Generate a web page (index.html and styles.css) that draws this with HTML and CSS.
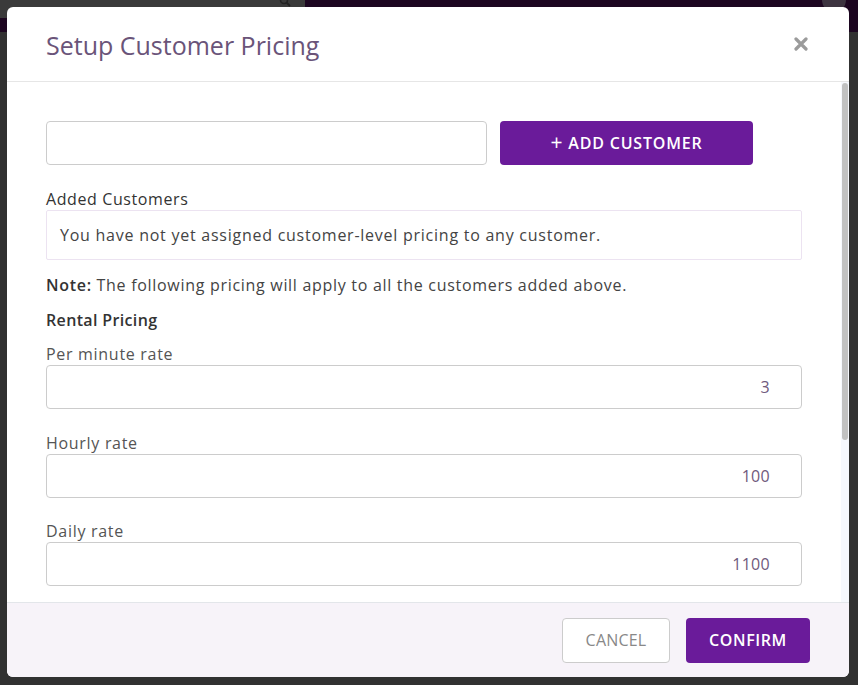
FILE: index.html
```html
<!DOCTYPE html>
<html lang="en">
<head>
    <meta charset="UTF-8">
    <meta name="viewport" content="width=device-width, initial-scale=1.0">
    <title>Setup Customer Pricing</title>
    <link rel="stylesheet" href="styles.css">
</head>
<body>

<div class="page-bar">
    <div class="search-box">
        <svg class="search-icon" width="12" height="12" viewBox="0 0 12 12"><circle cx="5" cy="5" r="3.5" fill="none" stroke="#222" stroke-width="1.6"/><path d="M7.5 7.5 L11 11" stroke="#222" stroke-width="1.8"/></svg>
    </div>
    <div class="avatar"></div>
</div>

<div class="modal">
    <div class="modal-header">
        <h2>Setup Customer Pricing</h2>
        <button type="button" class="close-btn">
            <svg width="14" height="14" viewBox="0 0 14 14"><path d="M2 2 L12 12 M12 2 L2 12" stroke="#9b9b9b" stroke-width="3.2" stroke-linecap="round"/></svg>
        </button>
    </div>

    <div class="modal-body">
        <div class="customer-row">
            <input type="text" class="text-input">
            <button type="button" class="btn-primary add-btn"><span class="plus">+</span> ADD CUSTOMER</button>
        </div>

        <div class="section-label">Added Customers</div>
        <div class="customer-list">You have not yet assigned customer-level pricing to any customer.</div>

        <p class="note"><b>Note:</b> The following pricing will apply to all the customers added above.</p>

        <div class="section-title">Rental Pricing</div>

        <div class="form-group">
            <label>Per minute rate</label>
            <input type="text" class="text-input rate" value="3">
        </div>
        <div class="form-group">
            <label>Hourly rate</label>
            <input type="text" class="text-input rate" value="100">
        </div>
        <div class="form-group">
            <label>Daily rate</label>
            <input type="text" class="text-input rate" value="1100">
        </div>
    </div>

    <!-- scrollbar drawn by hand so it looks the same everywhere -->
    <div class="scroll-track"><div class="scroll-thumb"></div></div>

    <div class="modal-footer">
        <button type="button" class="btn-cancel">CANCEL</button>
        <button type="button" class="btn-primary confirm-btn">CONFIRM</button>
    </div>
</div>

</body>
</html>
```

FILE: styles.css
```css
body {
    font-family: "Open Sans", Arial, sans-serif;
    background-color: #313131;
    margin: 0;
    height: 685px;
    overflow: hidden;
    color: #333;
}
.page-bar {
    height: 32px;
    background: #1c0620;
    position: relative;
}
.search-box {
    width: 305px;
    height: 18px;
    background: #3a3a3a;
    position: relative;
}
.search-icon {
    position: absolute;
    right: 14px;
    top: -5px;
}
.avatar {
    position: absolute;
    right: 12px;
    top: -12px;
    width: 24px;
    height: 24px;
    border-radius: 50%;
    background: #3d3440;
}
.modal {
    position: absolute;
    top: 7px;
    left: 7px;
    width: 842px;
    height: 670px;
    background: white;
    border-radius: 6px;
    display: flex;
    flex-direction: column;
    overflow: hidden;
}
.modal-header {
    display: flex;
    align-items: center;
    justify-content: space-between;
    height: 74px;
    padding: 0 41px 0 39px;
    border-bottom: 1px solid #e6e6e6;
    flex-shrink: 0;
}
.modal-header h2 {
    margin: 0;
    font-size: 25px;
    font-weight: 400;
    color: #6a5479;
    position: relative;
    top: 1px;
}
.close-btn {
    background: none;
    border: none;
    padding: 0;
    display: flex;
    cursor: pointer;
}
.modal-body {
    flex: 1;
    overflow-y: auto;
    scrollbar-width: none;
    padding: 39px 47px 20px 39px;
}
.scroll-track {
    position: absolute;
    right: 0;
    top: 75px;
    bottom: 75px;
    width: 8px;
    background: #f6f8fd;
}
.scroll-thumb {
    margin: 1px 1px 0 1px;
    height: 357px;
    background: #c1c1c1;
    border-radius: 4px;
}
.customer-row {
    display: flex;
    gap: 13px;
    margin-bottom: 23px;
}
.customer-row .text-input {
    width: 441px;
}
.text-input {
    height: 44px;
    box-sizing: border-box;
    border: 1px solid #cccccc;
    border-radius: 4px;
    padding: 0 31px;
    font-family: "Open Sans", Arial, sans-serif;
    font-size: 16px;
    color: #6f5a7c;
    letter-spacing: 0.3px;
}
.btn-primary {
    background-color: #6a1b9a;
    color: white;
    border: none;
    border-radius: 4px;
    height: 44px;
    font-family: "Open Sans", Arial, sans-serif;
    font-size: 16px;
    font-weight: 600;
    letter-spacing: 0.6px;
    line-height: 20px;
    cursor: pointer;
}
.add-btn {
    width: 253px;
    letter-spacing: 0.8px;
    padding-bottom: 2px;
}
.plus {
    font-size: 21px;
    font-weight: 400;
    vertical-align: -1px;
}
.section-label {
    font-size: 16px;
    line-height: 22px;
    letter-spacing: 0.6px;
}
.customer-list {
    border: 1px solid #ece3f1;
    border-radius: 2px;
    padding: 13px 13px;
    font-size: 16px;
    line-height: 22px;
    color: #444;
    letter-spacing: 0.75px;
}
.note {
    margin: 14px 0 0;
    font-size: 16px;
    line-height: 22px;
    color: #444;
    letter-spacing: 0.7px;
}
.note b {
    font-weight: 600;
    color: #333;
}
.section-title {
    font-size: 16px;
    line-height: 22px;
    font-weight: 600;
    letter-spacing: 0.35px;
    margin-top: 13px;
}
.form-group {
    margin-top: 12px;
}
.form-group + .form-group {
    margin-top: 22.5px;
}
.form-group label {
    display: block;
    font-size: 16px;
    color: #555;
    letter-spacing: 0.7px;
    line-height: 22px;
}
.rate {
    width: 100%;
    text-align: right;
}
.modal-footer {
    flex-shrink: 0;
    height: 74px;
    background: #f7f3f9;
    border-top: 1px solid #e3e6ea;
    display: flex;
    align-items: center;
    justify-content: flex-end;
    gap: 16px;
    padding-right: 39px;
}
.btn-cancel {
    width: 108px;
    height: 45px;
    background: white;
    border: 1px solid #cccccc;
    border-radius: 4px;
    color: #888;
    font-family: "Open Sans", Arial, sans-serif;
    font-size: 16px;
    letter-spacing: 0.2px;
    cursor: pointer;
}
.confirm-btn {
    width: 124px;
    height: 45px;
}
```
